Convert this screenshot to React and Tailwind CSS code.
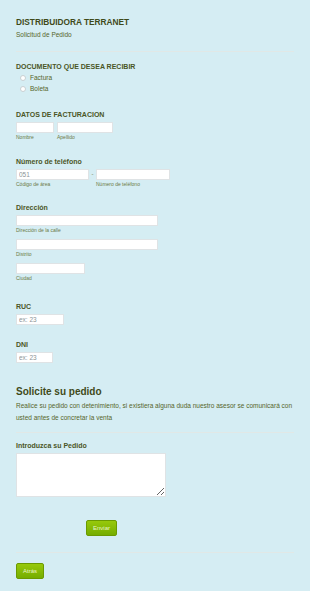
import React from "react";

const Input = ({ className = "", placeholder }) => (
  <input
    type="text"
    placeholder={placeholder}
    className={`block h-[11px] bg-white border border-[#dfe3e5] px-[2px] text-[6.5px] text-[#555] placeholder:text-[#8c9496] outline-none ${className}`}
  />
);

const Sub = ({ children }) => (
  <div className="mt-[1px] text-[5px] leading-[7px] text-[#6b7a45]">{children}</div>
);

const Label = ({ children, className = "" }) => (
  <div className={`text-[7px] leading-[10px] font-bold text-[#4b5626] ${className}`}>{children}</div>
);

const Divider = () => <div className="h-px bg-[#e1e8e6] mr-[16px]" />;

const GreenBtn = ({ children }) => (
  <button className="block h-[16px] px-[6px] rounded-[2px] border border-[#6b9a00] bg-gradient-to-b from-[#97c90b] to-[#75ad00] text-[6px] text-[#e9f5cc]">
    {children}
  </button>
);

export default function App() {
  return (
    <div
      className="min-h-[591px] w-[310px] bg-[#d5edf3] pl-[16px] pt-[17px] pb-[10px]"
      style={{ fontFamily: '"Liberation Sans", Arial, sans-serif' }}
    >
      <div className="text-[8.3px] leading-[11px] font-bold text-[#3f4a19]">DISTRIBUIDORA TERRANET</div>
      <div className="mt-[2px] text-[6.5px] leading-[9px] text-[#55652a]">Solicitud de Pedido</div>

      <div className="mt-[12px]">
        <Divider />
      </div>

      <Label className="mt-[10px]">DOCUMENTO QUE DESEA RECIBIR</Label>
      <div className="mt-[1px] pl-[4px] flex flex-col gap-[2px] text-[6.5px] leading-[9px] text-[#55652a]">
        <label className="flex items-center gap-[4px]">
          <span className="w-[6px] h-[6px] rounded-full bg-white border border-[#c9d0d2]" />
          Factura
        </label>
        <label className="flex items-center gap-[4px]">
          <span className="w-[6px] h-[6px] rounded-full bg-white border border-[#c9d0d2]" />
          Boleta
        </label>
      </div>

      <Label className="mt-[17px]">DATOS DE FACTURACION</Label>
      <div className="mt-[2px] flex gap-[3px]">
        <div>
          <Input className="w-[38px]" />
          <Sub>Nombre</Sub>
        </div>
        <div>
          <Input className="w-[56px]" />
          <Sub>Apellido</Sub>
        </div>
      </div>

      <Label className="mt-[16px]">Número de teléfono</Label>
      <div className="mt-[2px] flex items-start">
        <div>
          <Input className="w-[73px]" placeholder="051" />
          <Sub>Código de área</Sub>
        </div>
        <div className="w-[7px] text-center text-[6px] text-[#6b7a45] leading-[11px]">-</div>
        <div>
          <Input className="w-[74px]" />
          <Sub>Número de teléfono</Sub>
        </div>
      </div>

      <Label className="mt-[15px]">Dirección</Label>
      <div className="mt-[2px]">
        <Input className="w-[142px]" />
        <Sub>Dirección de la calle</Sub>
      </div>
      <div className="mt-[5px]">
        <Input className="w-[142px]" />
        <Sub>Distrito</Sub>
      </div>
      <div className="mt-[5px]">
        <Input className="w-[69px]" />
        <Sub>Ciudad</Sub>
      </div>

      <Label className="mt-[20px]">RUC</Label>
      <div className="mt-[2px]">
        <Input className="w-[48px]" placeholder="ex: 23" />
      </div>

      <Label className="mt-[15px]">DNI</Label>
      <div className="mt-[2px]">
        <Input className="w-[37px]" placeholder="ex: 23" />
      </div>

      <div className="mt-[22px] text-[10px] leading-[13px] font-bold text-[#3f4a19]">Solicite su pedido</div>
      <p className="mt-[2px] pr-[16px] text-[6.5px] leading-[12px] text-[#55652a]">
        Realice su pedido con detenimiento, si existiera alguna duda nuestro asesor se comunicará con usted antes de concretar la venta
      </p>

      <div className="mt-[8px]">
        <Divider />
      </div>

      <Label className="mt-[8px]">Introduzca su Pedido</Label>
      <textarea className="mt-[2px] block w-[150px] h-[44px] bg-white border border-[#dfe3e5] outline-none resize" />

      <div className="mt-[23px] pl-[70px]">
        <GreenBtn>Enviar</GreenBtn>
      </div>

      <div className="mt-[16px]">
        <Divider />
      </div>

      <div className="mt-[10px]">
        <GreenBtn>Atrás</GreenBtn>
      </div>
    </div>
  );
}
